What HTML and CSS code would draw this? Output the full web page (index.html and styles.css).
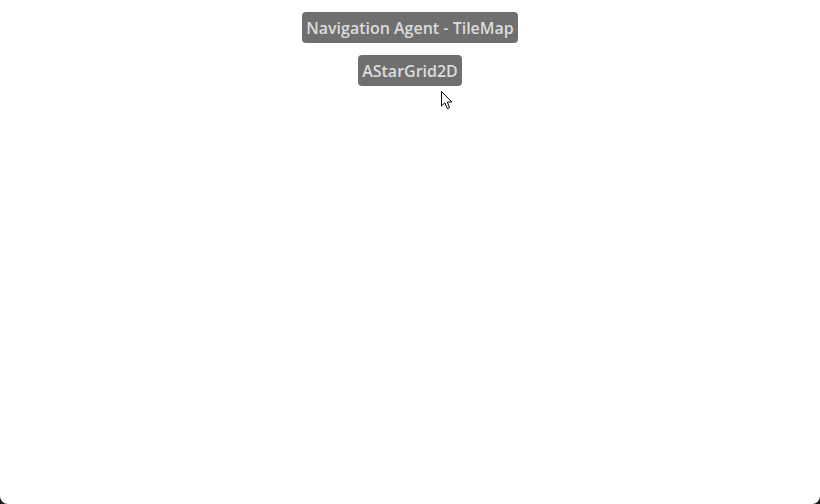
FILE: index.html
```html
<!DOCTYPE html>
<html>
<head>
<meta charset="utf-8">
<link rel="stylesheet" href="styles.css">
</head>
<body>
<div class="screen">
  <div class="labels">
    <span class="label">Navigation Agent - TileMap</span>
    <span class="label">AStarGrid2D</span>
  </div>
  <svg class="cursor" width="14" height="21" viewBox="0 0 14 21">
    <path d="M1.5 1.5 L1.5 16 L4.8 12.8 L7.3 18.6 L9.6 17.6 L7.2 12 L11.8 12 Z" fill="#fff" stroke="#000" stroke-width="1" stroke-linejoin="miter"/>
  </svg>
</div>
</body>
</html>
```
FILE: styles.css
```css
html {
  margin: 0;
  background: #1c1c1c;
}
body {
  margin: 0;
  height: 504px;
  overflow: hidden;
}
.screen {
  position: relative;
  height: 504px;
  background: #ffffff;
  border-radius: 0 0 8px 8px;
}
.labels {
  display: flex;
  flex-direction: column;
  align-items: center;
  gap: 12px;
  padding-top: 12px;
}
.label {
  display: block;
  background: #6f6f6f;
  color: #dcdcdc;
  font-family: "Open Sans", "Noto Sans", sans-serif;
  font-weight: 600;
  font-size: 16px;
  line-height: 30px;
  padding: 1px 4px 0;
  border-radius: 4px;
}
.cursor {
  position: absolute;
  left: 440px;
  top: 90px;
}
```
